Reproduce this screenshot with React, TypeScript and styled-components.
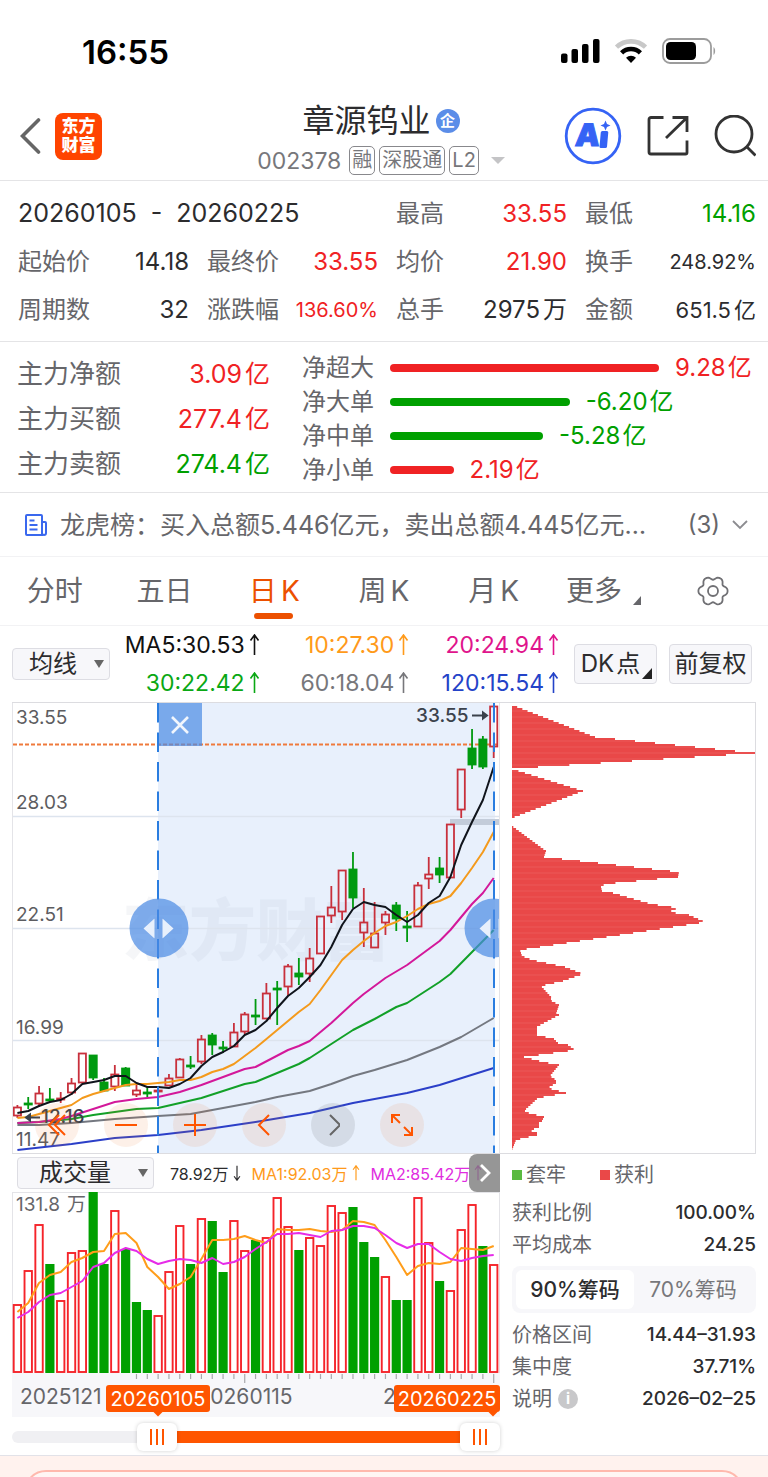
import React, { useState } from "react";
import styled, { createGlobalStyle } from "styled-components";

const RED = "#f02224";
const GREEN = "#00a000";
const INK = "#2c2c2e";
const MUTED = "#66666a";
const ORANGE = "#ff5500";
const FONT = '"Inter", "Noto Sans CJK SC", sans-serif';

const GlobalStyle = createGlobalStyle`
  *, *::before, *::after { box-sizing: border-box; }
  body { margin: 0; background: #fff; font-family: ${FONT}; color: ${INK}; }
  button, select, input { font-family: inherit; margin: 0; padding: 0; border: 0; background: none; color: inherit; }
  dl, dd, dt, h1, p, ul { margin: 0; padding: 0; list-style: none; }
  svg { display: block; }
`;

const toneColor = { up: RED, down: GREEN, flat: INK };
type Tone = keyof typeof toneColor;

/* ---------- status bar and header ---------- */

const Page = styled.div`
  overflow: hidden;
`;

const StatusBar = styled.div`
  display: flex;
  align-items: center;
  justify-content: space-between;
  height: 92px;
  padding: 10px 52px 0 82px;
`;

const Clock = styled.time`
  padding-top: 2px;
  font-size: 33px;
  line-height: 40px;
  font-weight: 600;
  color: #000;
`;

const Signals = styled.div`
  display: flex;
  align-items: center;
  gap: 14px;
`;

const Header = styled.header`
  display: grid;
  grid-template-columns: 1fr auto 1fr;
  align-items: center;
  height: 89px;
  padding: 0 12px 0 6px;
  border-bottom: 1px solid #e4e4e6;
`;

const HeaderSide = styled.div<{ $end?: boolean }>`
  display: flex;
  align-items: center;
  gap: ${(p) => (p.$end ? 25 : 14)}px;
  justify-content: ${(p) => (p.$end ? "flex-end" : "flex-start")};
  padding-left: ${(p) => (p.$end ? 0 : 14)}px;
`;

const IconButton = styled.button`
  display: flex;
  align-items: center;
  justify-content: center;
  cursor: pointer;
`;

const BrandLogo = styled.a`
  display: grid;
  place-content: center;
  width: 47px;
  height: 47px;
  border-radius: 8px;
  background: #ff4400;
  color: #fff;
  font-size: 17px;
  line-height: 19px;
  font-weight: 900;
  text-decoration: none;
`;

const TitleBlock = styled.div`
  display: flex;
  flex-direction: column;
  align-items: center;
  gap: 5px;
  padding-top: 4px;
`;

const TitleLine = styled.div`
  display: flex;
  align-items: center;
  gap: 5px;
`;

const StockName = styled.h1`
  font-size: 32px;
  line-height: 40px;
  font-weight: 400;
`;

const CompanyBadge = styled.span`
  display: grid;
  place-content: center;
  width: 24px;
  height: 24px;
  border-radius: 50%;
  background: #5b8de8;
  color: #fff;
  font-size: 15px;
  line-height: 20px;
  font-weight: 700;
`;

const CodeLine = styled.div`
  display: flex;
  align-items: center;
  gap: 4px;
  color: #77777b;
  font-size: 23px;
  line-height: 30px;
`;

const StockCode = styled.span`
  margin-right: 4px;
`;

const Tag = styled.span`
  height: 29px;
  padding: 0 2px;
  border: 1px solid #88888c;
  border-radius: 5px;
  font-size: 20px;
  line-height: 27px;
`;

const Caret = styled.i<{ $color: string; $size: number; $height: number }>`
  border: ${(p) => p.$size}px solid transparent;
  border-bottom-width: 0;
  border-top: ${(p) => p.$height}px solid ${(p) => p.$color};
`;

const SwitchStock = styled(IconButton)`
  margin-left: 8px;
`;

/* ---------- quote statistics ---------- */

const Stats = styled.dl`
  display: grid;
  grid-template-columns: repeat(4, 1fr);
  column-gap: 18px;
  grid-auto-rows: 48px;
  padding: 9px 12px 7px 18px;
  border-bottom: 1px solid #e4e4e6;
`;

const DateRange = styled.div`
  grid-column: span 2;
  font-size: 25px;
  line-height: 46px;
  white-space: pre;
`;

const Stat = styled.div`
  display: flex;
  align-items: center;
  justify-content: space-between;
  white-space: nowrap;
`;

const StatLabel = styled.dt`
  color: ${MUTED};
  font-size: 24px;
  line-height: 32px;
`;

const StatValue = styled.dd<{ $tone: Tone; $size?: number }>`
  display: flex;
  gap: 3px;
  color: ${(p) => toneColor[p.$tone]};
  font-size: ${(p) => p.$size ?? 24}px;
  line-height: 32px;
`;

/* ---------- capital flow ---------- */

const FlowSection = styled.section`
  display: grid;
  grid-template-columns: 34fr 61fr;
  column-gap: 32px;
  padding: 9px 12px 6px 17px;
  height: 151px;
  border-bottom: 1px solid #e4e4e6;
`;

const FlowTotals = styled.dl`
  display: flex;
  flex-direction: column;
  justify-content: space-around;
`;

const FlowTotal = styled.div`
  display: flex;
  justify-content: space-between;
  font-size: 26px;
  line-height: 44px;
`;

const FlowName = styled.dt`
  color: ${MUTED};
`;

const FlowAmount = styled.dd<{ $tone: Tone }>`
  display: flex;
  gap: 3px;
  color: ${(p) => toneColor[p.$tone]};
  font-size: 25px;
`;

const OrderFlows = styled.ul`
  display: flex;
  flex-direction: column;
  justify-content: space-between;
`;

const OrderFlow = styled.li`
  display: flex;
  align-items: center;
  font-size: 24px;
  line-height: 33px;
  white-space: nowrap;
`;

const OrderName = styled.span`
  width: 88px;
  flex: none;
  color: ${MUTED};
`;

const OrderTrack = styled.div`
  display: flex;
  flex: 1;
  align-items: center;
  gap: 16px;
`;

const OrderBar = styled.i<{ $tone: Tone }>`
  height: 8px;
  border-radius: 4px;
  background: ${(p) => toneColor[p.$tone]};
`;

const OrderAmount = styled.span<{ $tone: Tone }>`
  display: flex;
  gap: 2px;
  color: ${(p) => toneColor[p.$tone]};
`;

/* ---------- news line and tabs ---------- */

const NewsLine = styled.a`
  display: flex;
  align-items: center;
  height: 64px;
  padding: 0 20px 0 24px;
  border-bottom: 1px solid #f2f2f4;
  color: ${MUTED};
  font-size: 25px;
  line-height: 36px;
  text-decoration: none;
`;

const NewsText = styled.span`
  flex: 1;
  min-width: 0;
  margin: 0 16px 0 12px;
  overflow: hidden;
  text-overflow: ellipsis;
  white-space: nowrap;
`;

const NewsCount = styled.span`
  margin-right: 12px;
  font-size: 24px;
`;

const Tabs = styled.nav`
  display: grid;
  grid-template-columns: repeat(7, 1fr);
  height: 69px;
  border-bottom: 1px solid #f2f2f4;
`;

const Tab = styled.button<{ $active?: boolean }>`
  position: relative;
  display: flex;
  align-items: center;
  justify-content: center;
  gap: 4px;
  color: ${(p) => (p.$active ? "#ec5000" : MUTED)};
  font-size: 28px;
  line-height: 40px;
  cursor: pointer;

  &::after {
    content: "";
    display: ${(p) => (p.$active ? "block" : "none")};
    position: absolute;
    bottom: 6px;
    left: calc(50% - 20px);
    width: 39px;
    height: 6px;
    border-radius: 3px;
    background: #ec5000;
  }
`;

const CornerMark = styled.i<{ $size: number; $color: string }>`
  align-self: flex-end;
  border-left: ${(p) => p.$size}px solid transparent;
  border-bottom: ${(p) => p.$size + 1}px solid ${(p) => p.$color};
`;

const MoreMark = styled(CornerMark)`
  margin: 0 0 20px 7px;
`;

/* ---------- moving-average toolbar ---------- */

const Toolbar = styled.div`
  display: flex;
  align-items: center;
  height: 76px;
  padding: 0 16px 0 12px;
`;

const SelectBox = styled.label<{ $wide?: boolean }>`
  display: flex;
  align-items: center;
  justify-content: space-between;
  flex: none;
  width: ${(p) => (p.$wide ? 137 : 98)}px;
  height: 32px;
  padding: 0 5px 0 ${(p) => (p.$wide ? 21 : 16)}px;
  border: 1px solid #dddde3;
  border-radius: 4px;
  background: #f7f7fa;
  font-size: 24px;

  select {
    appearance: none;
    flex: 1;
    height: 30px;
    font-size: 24px;
    line-height: 30px;
  }
`;

const Averages = styled.ul`
  display: grid;
  grid-template-columns: repeat(3, 1fr);
  flex: 1;
  grid-auto-rows: 38px;
  margin-right: 15px;
`;

const Average = styled.li<{ $color: string }>`
  display: flex;
  align-items: center;
  justify-content: flex-end;
  gap: 4px;
  color: ${(p) => p.$color};
  font-size: 23px;
  white-space: nowrap;
`;

const ToolButtons = styled.div`
  display: flex;
  gap: 12px;
`;

const ToolButton = styled.button`
  display: flex;
  align-items: center;
  justify-content: center;
  gap: 2px;
  width: 83px;
  height: 40px;
  border: 1px solid #dddde3;
  border-radius: 4px;
  background: #f7f7fa;
  font-size: 24px;
  line-height: 38px;
  white-space: nowrap;
  cursor: pointer;
`;

const ToolCorner = styled(CornerMark)`
  margin: 0 -2px 4px 0;
`;

/* ---------- charts ---------- */

const ChartRow = styled.div<{ $framed?: boolean }>`
  display: grid;
  grid-template-columns: 2fr 1fr;
  column-gap: 12px;
  margin: 0 12px;
  border: solid #dcdce0;
  border-width: ${(p) => (p.$framed ? "1px 0" : "0")};
`;

const PricePane = styled.div`
  position: relative;
  overflow: hidden;
  border: solid #e4e4e8;
  border-width: 0 1px;
`;

const ChartSvg = styled.svg`
  width: 100%;
  height: auto;
  font-family: ${FONT};
`;

const ChipPane = styled.div`
  border-right: 1px solid #dcdce0;
`;

const CloseRange = styled.button`
  position: absolute;
  top: 0;
  left: 30%;
  display: grid;
  place-content: center;
  width: 43px;
  height: 43px;
  background: rgba(74, 138, 228, 0.7);
  cursor: pointer;
`;

const RangeHandle = styled.button<{ $at: number }>`
  position: absolute;
  top: 50%;
  left: ${(p) => p.$at}%;
  display: grid;
  place-content: center;
  width: 59px;
  height: 59px;
  border-radius: 50%;
  background: rgba(74, 138, 228, 0.7);
  transform: translate(-50%, -50%);
  cursor: ew-resize;
`;

const ChartControls = styled.div`
  position: absolute;
  left: 22px;
  bottom: 6px;
  display: flex;
  gap: 25px;
`;

const ChartControl = styled.button<{ $muted?: boolean }>`
  display: grid;
  place-content: center;
  width: 44px;
  height: 44px;
  border-radius: 50%;
  background: ${(p) => (p.$muted ? "rgba(120, 125, 135, 0.18)" : "rgba(240, 120, 50, 0.11)")};
  color: ${(p) => (p.$muted ? "#666" : ORANGE)};
  cursor: pointer;
`;

const VolumePane = styled.div`
  min-width: 0;
  padding-bottom: 5px;
`;

const VolumeBar = styled.div`
  position: relative;
  display: flex;
  align-items: center;
  height: 38px;
  overflow: hidden;
  padding-left: 5px;
  white-space: nowrap;
`;

const VolumeFigure = styled.span<{ $color: string }>`
  display: flex;
  align-items: center;
  gap: 4px;
  margin-left: 11px;
  color: ${(p) => p.$color};
  font-size: 16px;

  &:first-of-type {
    margin-left: 16px;
  }
`;

const ExpandButton = styled.button`
  position: absolute;
  top: 0;
  right: 0;
  display: grid;
  place-content: center;
  width: 31px;
  height: 38px;
  border-radius: 8px 0 0 8px;
  background: rgba(120, 120, 120, 0.78);
  cursor: pointer;
`;

const RangeSlider = styled.div`
  position: relative;
  height: 33px;
  display: flex;
  align-items: center;
`;

const SliderTrack = styled.div`
  position: relative;
  width: 100%;
  height: 12px;
  margin-top: 6px;
  border-radius: 6px;
  background: #f0f0f3;
`;

const SliderFill = styled.i`
  position: absolute;
  top: 0;
  bottom: 0;
  right: 20px;
  background: ${ORANGE};
`;

const SliderInput = styled.input`
  position: absolute;
  left: 0;
  top: -8px;
  width: 100%;
  height: 28px;
  appearance: none;
  pointer-events: none;

  &::-webkit-slider-thumb {
    appearance: none;
    width: 40px;
    height: 28px;
    border-radius: 6px;
    pointer-events: auto;
    background:
      linear-gradient(#ff5500, #ff5500) 13px 6px / 2px 16px no-repeat,
      linear-gradient(#ff5500, #ff5500) 19px 6px / 2px 16px no-repeat,
      linear-gradient(#ff5500, #ff5500) 25px 6px / 2px 16px no-repeat,
      #fff;
    box-shadow: 0 0 4px rgba(0, 0, 0, 0.18);
  }
`;

/* ---------- chip distribution figures ---------- */

const ChipInfo = styled.section`
  padding-top: 5px;
`;

const Legend = styled.ul`
  display: flex;
  gap: 34px;
  height: 32px;
`;

const LegendItem = styled.li<{ $color: string }>`
  display: flex;
  align-items: center;
  gap: 4px;
  color: ${MUTED};
  font-size: 20px;
  line-height: 32px;

  &::before {
    content: "";
    width: 10px;
    height: 10px;
    background: ${(p) => p.$color};
  }
`;

const ChipList = styled.dl`
  padding: 6px 0 5px;
`;

const ChipRow = styled.div`
  display: flex;
  justify-content: space-between;
  align-items: center;
  height: 32px;
  font-size: 20px;
  line-height: 32px;
  white-space: nowrap;

  dt {
    display: flex;
    align-items: center;
    gap: 6px;
    color: ${MUTED};
  }

  dd {
    font-size: 19px;
    font-weight: 500;
  }
`;

const Segments = styled.div`
  display: flex;
  height: 47px;
  padding: 4px;
  border-radius: 8px;
  background: #f7f7fa;
`;

const Segment = styled.button<{ $active?: boolean }>`
  flex: 1;
  border-radius: 6px;
  background: ${(p) => (p.$active ? "#fff" : "transparent")};
  color: ${(p) => (p.$active ? INK : "#77777b")};
  font-size: 21px;
  line-height: 39px;
  font-weight: ${(p) => (p.$active ? 500 : 400)};
  white-space: nowrap;
  cursor: pointer;
`;

const InfoMark = styled.button`
  width: 20px;
  height: 20px;
  border-radius: 50%;
  background: #c8c8ca;
  color: #fff;
  font-size: 15px;
  line-height: 20px;
  font-weight: 700;
`;

/* ---------- footer ---------- */

const Footer = styled.footer`
  height: 22px;
  overflow: hidden;
  padding: 14px 24px 0;
  border-top: 1px solid #e2e2e8;
  background: #fff2ee;
`;

const PromoCard = styled.div`
  height: 48px;
  border: 2px solid #ffb9ad;
  border-radius: 22px;
  background: #fff6f4;
`;

/* ---------- data ---------- */

type Candle = [rising: 0 | 1, high: number, top: number, bottom: number, low: number];

const candles: Candle[] = [
  [1, 403, 405, 414, 416], [0, 395, 401, 402, 407], [1, 384, 391, 402, 405], [0, 386, 397, 399, 400],
  [1, 390, 396, 397, 401], [1, 376, 381, 391, 393], [1, 351, 351, 381, 381], [0, 353, 353, 376, 378],
  [0, 376, 380, 389, 390], [1, 363, 372, 385, 389], [0, 365, 366, 384, 384], [1, 381, 388, 393, 395],
  [0, 385, 390, 392, 395], [1, 386, 388, 390, 392], [1, 372, 376, 384, 384], [1, 356, 357, 376, 376],
  [0, 354, 363, 364, 367], [1, 333, 337, 360, 362], [0, 331, 333, 343, 353], [0, 339, 345, 346, 351],
  [1, 321, 330, 345, 345], [1, 310, 312, 330, 332], [0, 297, 313, 315, 323], [1, 281, 291, 317, 317],
  [0, 279, 286, 287, 323], [1, 262, 264, 285, 294], [0, 256, 271, 275, 283], [1, 246, 256, 272, 280],
  [1, 214, 214, 252, 252], [1, 184, 205, 214, 221], [1, 168, 168, 210, 218], [0, 150, 167, 196, 206],
  [1, 186, 220, 231, 245], [1, 200, 231, 246, 246], [1, 209, 212, 221, 233], [0, 200, 203, 217, 229],
  [0, 209, 224, 226, 240], [1, 180, 183, 225, 225], [1, 155, 172, 177, 187], [0, 155, 166, 173, 181],
  [1, 122, 122, 176, 176], [1, 67, 67, 108, 116], [0, 27, 46, 63, 67], [0, 34, 37, 65, 67],
  [1, 4, 4, 45, 56],
];

type Point = [index: number, y: number];
const dense = (ys: number[]): Point[] => ys.map((y, i) => [i, y]);

const priceLines: { color: string; points: Point[] }[] = [
  { color: "#2b3fc8", points: [[0, 448], [5, 442], [9, 436], [13, 433], [17, 428], [22, 420], [27, 411], [31, 401], [36, 391], [39, 383], [44, 366]] },
  { color: "#747880", points: [[0, 423], [2, 423], [5, 421], [9, 417], [13, 414], [16, 412], [19, 406], [22, 400], [24, 395], [27, 389], [29, 382], [31, 374], [33, 368], [36, 358], [39, 345], [41, 335], [44, 316]] },
  { color: "#12a028", points: [[0, 421], [2, 420], [5, 417], [7, 413], [9, 410], [11, 407], [13, 406], [15, 401], [17, 396], [19, 389], [21, 382], [22, 380], [24, 371], [26, 362], [27, 356], [29, 342], [31, 328], [33, 317], [35, 305], [36, 301], [39, 280], [40, 272], [44, 228]] },
  { color: "#d3189a", points: [[0, 421], [2, 420], [4, 417], [5, 414], [7, 407], [9, 400], [11, 397], [13, 395], [15, 390], [17, 383], [19, 375], [21, 367], [22, 365], [25, 348], [26, 344], [27, 339], [29, 321], [31, 301], [32, 292], [34, 276], [36, 263], [37, 255], [39, 239], [40, 228], [42, 202], [43, 191], [44, 176]] },
  { color: "#f49a1c", points: dense([416, 415, 412, 409, 406, 403, 396, 392, 389, 386, 383, 382, 382, 381, 380, 378, 378, 375, 370, 367, 362, 354, 346, 337, 328, 319, 310, 302, 288, 273, 258, 248, 239, 231, 224, 220, 214, 207, 202, 199, 194, 181, 166, 150, 130]) },
  { color: "#10141c", points: dense([411, 409, 404, 400, 398, 392, 382, 380, 378, 374, 374, 381, 385, 385, 386, 382, 376, 364, 355, 350, 344, 333, 328, 319, 306, 294, 286, 275, 263, 245, 223, 207, 200, 203, 205, 213, 220, 213, 201, 194, 175, 143, 120, 98, 65]) },
];

const priceTicks: [string, number][] = [["33.55", 21], ["28.03", 106], ["22.51", 218], ["16.99", 331], ["11.47", 443]];

const volumeTops = [
  112, 78, 32, 72, 108, 60, 58, 0, 72, 18, 57, 110, 118, 123, 79, 33, 72, 26, 29, 80, 28, 58, 48, 45, 5, 34, 58, 45, 53,
  13, 20, 15, 50, 65, 84, 108, 108, 5, 50, 89, 98, 37, 12, 54, 72,
];

/* sessions whose volume bar is drawn solid green */
const fallingVolume = new Set([3, 7, 8, 10, 11, 12, 16, 18, 19, 22, 26, 31, 32, 33, 35, 36, 39, 43]);

const volumeLines = [
  { color: "#ff9d1a", points: dense([120, 111, 91, 83, 80, 70, 66, 60, 59, 42, 41, 51, 75, 85, 97, 92, 85, 67, 48, 48, 47, 44, 48, 51, 37, 38, 38, 37, 39, 40, 38, 29, 30, 33, 48, 65, 83, 74, 71, 72, 70, 56, 57, 58, 54]) },
  { color: "#e62ce8", points: dense([126, 120, 110, 103, 101, 95, 89, 75, 71, 61, 56, 59, 67, 72, 69, 67, 68, 71, 66, 72, 70, 65, 57, 50, 42, 42, 41, 43, 45, 39, 38, 34, 34, 36, 43, 51, 56, 52, 52, 60, 67, 69, 66, 64, 63]) },
];

const chipOutline: [width: number, y: number][] = [
  [0, 3], [83, 35], [243, 51], [214, 53], [26, 65], [0, 66], [0, 67], [71, 89], [0, 116], [0, 124], [34, 149], [32, 155],
  [167, 170], [166, 175], [93, 182], [89, 185], [90, 189], [101, 191], [139, 202], [166, 206], [157, 210], [177, 213],
  [193, 220], [181, 222], [8, 248], [10, 254], [20, 258], [53, 265], [71, 272], [51, 279], [29, 284], [40, 296],
  [38, 298], [47, 303], [44, 312], [47, 313], [30, 322], [25, 325], [25, 333], [42, 337], [47, 342], [56, 343],
  [63, 348], [34, 352], [12, 355], [31, 360], [47, 363], [38, 374], [44, 378], [44, 381], [36, 386], [54, 391],
  [26, 396], [13, 408], [13, 410], [32, 415], [30, 419], [27, 421], [27, 426], [17, 428], [25, 431], [25, 433],
  [4, 438], [0, 448],
];

const chipWidthAt = (y: number) => {
  const next = chipOutline.findIndex((p) => p[1] >= y);
  if (next <= 0) return 0;
  const [w0, y0] = chipOutline[next - 1];
  const [w1, y1] = chipOutline[next];
  return w0 + ((w1 - w0) * (y - y0)) / (y1 - y0);
};

const xAt = (i: number) => 5.4 + 10.825 * i;
const toPath = (points: Point[]) => points.map(([i, y]) => `${xAt(i).toFixed(1)},${y}`).join(" ");

const quoteStats: { label: string; value: string; unit?: string; tone: Tone; size?: number }[] = [
  { label: "最高", value: "33.55", tone: "up" },
  { label: "最低", value: "14.16", tone: "down" },
  { label: "起始价", value: "14.18", tone: "flat" },
  { label: "最终价", value: "33.55", tone: "up" },
  { label: "均价", value: "21.90", tone: "up" },
  { label: "换手", value: "248.92%", tone: "flat", size: 20 },
  { label: "周期数", value: "32", tone: "flat" },
  { label: "涨跌幅", value: "136.60%", tone: "up", size: 20 },
  { label: "总手", value: "2975", unit: "万", tone: "flat" },
  { label: "金额", value: "651.5", unit: "亿", tone: "flat", size: 22 },
];

const flowTotals: { label: string; value: string; tone: Tone }[] = [
  { label: "主力净额", value: "3.09", tone: "up" },
  { label: "主力买额", value: "277.4", tone: "up" },
  { label: "主力卖额", value: "274.4", tone: "down" },
];

const orderFlows = [
  { label: "净超大", value: 9.28 },
  { label: "净大单", value: -6.2 },
  { label: "净中单", value: -5.28 },
  { label: "净小单", value: 2.19 },
];

const averages = [
  { text: "MA5:30.53", color: "#111" },
  { text: "10:27.30", color: "#ff9a1a" },
  { text: "20:24.94", color: "#e0148c" },
  { text: "30:22.42", color: "#0aa814" },
  { text: "60:18.04", color: "#77777b" },
  { text: "120:15.54", color: "#2443c8" },
];

/* ---------- small drawings ---------- */

const Arrow = ({ down, size = 22 }: { down?: boolean; size?: number }) => (
  <svg width={size / 2} height={size} viewBox="0 0 11 22" fill="none" stroke="currentColor" strokeWidth="1.6" aria-hidden="true">
    <path d={down ? "M5.5 1v20M1.5 15.5l4 5.5 4-5.5" : "M5.5 21V1M1.5 6.5l4-5.5 4 5.5"} />
  </svg>
);

const SignalIcon = () => (
  <svg width="39" height="26" viewBox="0 0 39 26" aria-label="信号">
    <rect x="0" y="15.500" width="6.500" height="9.500" rx="2" />
    <rect x="10.500" y="11" width="6.500" height="14" rx="2" />
    <rect x="21" y="6" width="6.500" height="19" rx="2" />
    <rect x="32" y="1" width="6.500" height="24" rx="2" />
  </svg>
);

const WifiIcon = () => (
  <svg width="34" height="26" viewBox="0 0 34 26" fill="none" aria-label="无线网络">
    <path d="M2.500 9.200a21 21 0 0 1 29 0" stroke="#c8c8c8" strokeWidth="4.600" />
    <path d="M7.600 14.800a13.600 13.600 0 0 1 18.800 0" stroke="#000" strokeWidth="4.600" />
    <path d="M17 25l-5-5.200a7.200 7.200 0 0 1 10 0z" fill="#000" />
  </svg>
);

const BatteryIcon = () => (
  <svg width="54" height="26" viewBox="0 0 54 26" aria-label="电池">
    <rect x="1" y="1" width="48" height="24" rx="7" fill="none" stroke="#9c9c9c" strokeWidth="1.800" />
    <rect x="4" y="4" width="30" height="18" rx="4.500" />
    <path d="M51.500 9v8c2.200-1.400 2.200-6.600 0-8z" fill="#9c9c9c" />
  </svg>
);

const AiIcon = () => (
  <svg width="58" height="58" viewBox="0 0 58 58">
    <circle cx="29" cy="29" r="26.800" fill="none" stroke="#3563f5" strokeWidth="2.800" />
    <g fill="#3563f5" transform="skewX(-5)">
      <text x="14" y="39.500" fontFamily="Inter" fontWeight="900" fontSize="31" stroke="#3563f5" strokeWidth="1">A</text>
      <rect x="39" y="24" width="7.500" height="17" rx="1.500" />
    </g>
    <path d="M41.500 13.500l1.500 3.500 3.500 1.500-3.500 1.500-1.500 3.500-1.500-3.500-3.500-1.500 3.500-1.500z" fill="#3563f5" />
  </svg>
);

const ShareIcon = () => (
  <svg width="42" height="42" viewBox="0 0 42 42" fill="none" stroke="#333" strokeWidth="2.800">
    <path d="M16.500 2.500H4a2 2 0 0 0-2 2V37a2 2 0 0 0 2 2h34.500a1.500 1.500 0 0 0 1.500-1.500V25.500" />
    <path d="M25.500 2.500H40V17M39.500 3L19 23" />
  </svg>
);

const SearchIcon = () => (
  <svg width="42" height="42" viewBox="0 0 42 42" fill="none" stroke="#333" strokeWidth="2.800">
    <circle cx="20" cy="19" r="18" />
    <path d="M32.500 31.500l9 9" />
  </svg>
);

const gearPath =
  Array.from({ length: 72 }, (_, k) => {
    const a = (k * Math.PI) / 36;
    const r = 13.2 + 1.7 * Math.cos(6 * a) - 0.3 * Math.cos(12 * a);
    return `${k ? "L" : "M"}${(17 + r * Math.cos(a)).toFixed(2)} ${(16 + r * Math.sin(a)).toFixed(2)}`;
  }).join("") + "Z";

const GearIcon = () => (
  <svg width="34" height="32" viewBox="0 0 34 32" fill="none" stroke="#707074" strokeWidth="1.800">
    <path d={gearPath} strokeLinejoin="round" />
    <circle cx="17" cy="16" r="5" />
  </svg>
);

const ListIcon = () => (
  <svg width="24" height="24" viewBox="0 0 24 24" fill="none" stroke="#3a68ee" strokeWidth="2">
    <path d="M18 22H3a1 1 0 0 1-1-1V3a1 1 0 0 1 1-1h14a1 1 0 0 1 1 1z" />
    <path d="M18 9h3a1 1 0 0 1 1 1v10a2 2 0 0 1-4 0M5.500 7.500h5M5.500 12h8M5.500 16.500h8" />
  </svg>
);

/* ---------- chart components ---------- */

const PriceChart = () => (
  <ChartSvg viewBox="0 0 486 450" role="img" aria-label="日K线图">
    <rect x="145" y="0" width="337" height="450" fill="#e8f0fc" />
    <text x="109" y="252" fontSize="67" fontWeight="900" fill="#8090a8" opacity="0.07">东方财富</text>
    <path d="M0 113.500H486M0 225.500H486M0 337.500H486" stroke="#dde4ee" strokeWidth="1.500" />
    <rect x="437" y="116" width="49" height="6" fill="#c3ccda" />
    <path d="M0 41.500H486" stroke="#ef7a3c" strokeWidth="2" strokeDasharray="4 2" />
    {priceTicks.map(([label, y]) => (
      <text key={label} x="3" y={y} fontSize="19" fill="#5c5c60">{label}</text>
    ))}
    {candles.map(([rising, high, top, bottom, low], i) => {
      const x = xAt(i) - 1;
      const color = rising ? "#c8303c" : "#009a10";
      return (
        <g key={i} stroke={color} strokeWidth="1.800" fill={rising ? "none" : color}>
          <path d={`M${x} ${high - 1}V${top - 1}M${x} ${bottom - 1}V${low - 1}`} />
          <rect x={x - 3.6} y={top - 0.5} width="7.200" height={Math.max(bottom - top - 1, 1)} />
        </g>
      );
    })}
    <g transform="translate(-1 -1)" fill="none" strokeWidth="2" strokeLinejoin="round">
      {priceLines.map((line) => (
        <polyline key={line.color} points={toPath(line.points)} stroke={line.color} />
      ))}
    </g>
    <g fill="#3b424c" fontSize="19" fontWeight="500">
      <text x="403" y="19">33.55</text>
      <path d="M459 12.500h13M470 9.500v6l4-3z" stroke="#3b424c" strokeWidth="2" />
      <text x="28" y="420">12.16</text>
      <path d="M27 414.500H15M17 411.500v6l-4-3z" stroke="#3b424c" strokeWidth="2" />
    </g>
    <path d="M145 0V450M481 0V450" stroke="#2a7de0" strokeWidth="2" strokeDasharray="19.500 10" />
  </ChartSvg>
);

const ChipChart = () => (
  <ChartSvg viewBox="0 0 243 450" role="img" aria-label="筹码分布">
    {Array.from({ length: 223 }, (_, k) => 3 + k * 2).map((y, k) => {
      const width = chipWidthAt(y);
      return width > 0 ? (
        <rect key={y} x="0" y={y - 2} width={width} height="2" fill={k % 3 ? "#e94848" : "#ea5050"} />
      ) : null;
    })}
  </ChartSvg>
);

const DateFlag = ({ x, width, tip, label }: { x: number; width: number; tip: number; label: string }) => (
  <g fill={ORANGE}>
    <rect x={x} y="193" width={width} height="27" rx="3" />
    <path d={`M${tip - 5} 219.500h10l-5 5z`} />
    <text x={x + width / 2} y="214" fontSize="20" fill="#fff" textAnchor="middle">{label}</text>
  </g>
);

const VolumeChart = () => (
  <ChartSvg viewBox="0 0 488 225" role="img" aria-label="成交量图">
    <path d="M0 0.500H488M0.500 0V181M487.500 0V181" stroke="#e4e4e8" />
    <rect x="0" y="181" width="488" height="44" fill="#f7f7fa" />
    <text x="4" y="19" fontSize="19" fill={MUTED}>131.8</text>
    <text x="55" y="19" fontSize="19" fill={MUTED}>万</text>
    {volumeTops.map((top, i) =>
      fallingVolume.has(i) ? (
        <rect key={i} x={xAt(i) - 4.6} y={top} width="9.200" height={181 - top} fill="#00a000" />
      ) : (
        <rect key={i} x={xAt(i) - 3.7} y={top + 1} width="7.400" height={179 - top} fill="#fff" stroke="#f5242a" strokeWidth="1.900" />
      ),
    )}
    <g fill="none" strokeWidth="2" strokeLinejoin="round">
      {volumeLines.map((line) => (
        <polyline key={line.color} points={toPath(line.points)} stroke={line.color} />
      ))}
    </g>
    {volumeTops.map((_, i) =>
      i > 10 ? <path key={i} d={`M${xAt(i)} 182v${i === 21 || i === 44 ? 9 : 5}`} stroke="#a8a8ac" strokeWidth="1.200" /> : null,
    )}
    <g fontSize="21" fill={MUTED}>
      <text x="8" y="212">2025121</text>
      <text x="233" y="212" textAnchor="middle">20260115</text>
      <text x="371" y="212">2</text>
    </g>
    <DateFlag x={94} width={104} tip={146} label="20260105" />
    <DateFlag x={382} width={106} tip={481} label="20260225" />
  </ChartSvg>
);

export default function App() {
  const [rangeStart, setRangeStart] = useState(28);
  const [rangeEnd, setRangeEnd] = useState(100);
  const [chipShare, setChipShare] = useState(90);
  const [period, setPeriod] = useState("日K");

  return (
    <Page>
      <GlobalStyle />
      <StatusBar>
        <Clock>16:55</Clock>
        <Signals>
          <SignalIcon />
          <WifiIcon />
          <BatteryIcon />
        </Signals>
      </StatusBar>

      <Header>
        <HeaderSide>
          <IconButton aria-label="返回">
            <svg width="21" height="38" viewBox="0 0 21 38" fill="none" stroke="#666" strokeWidth="3.600" strokeLinecap="round">
              <path d="M18.500 3L2.500 19l16 16" />
            </svg>
          </IconButton>
          <BrandLogo href="#home">
            <span>东方</span>
            <span>财富</span>
          </BrandLogo>
        </HeaderSide>
        <TitleBlock>
          <TitleLine>
            <StockName>章源钨业</StockName>
            <CompanyBadge>企</CompanyBadge>
          </TitleLine>
          <CodeLine>
            <StockCode>002378</StockCode>
            <Tag>融</Tag>
            <Tag>深股通</Tag>
            <Tag>L2</Tag>
            <SwitchStock aria-label="切换股票">
              <Caret $color="#c4c4c6" $size={7} $height={7} />
            </SwitchStock>
          </CodeLine>
        </TitleBlock>
        <HeaderSide $end>
          <IconButton aria-label="AI 助手"><AiIcon /></IconButton>
          <IconButton aria-label="分享"><ShareIcon /></IconButton>
          <IconButton aria-label="搜索"><SearchIcon /></IconButton>
        </HeaderSide>
      </Header>

      <Stats>
        <DateRange>20260105  -  20260225</DateRange>
        {quoteStats.map((s) => (
          <Stat key={s.label}>
            <StatLabel>{s.label}</StatLabel>
            <StatValue $tone={s.tone} $size={s.size}>
              <span>{s.value}</span>
              {s.unit && <span>{s.unit}</span>}
            </StatValue>
          </Stat>
        ))}
      </Stats>

      <FlowSection>
        <FlowTotals>
          {flowTotals.map((f) => (
            <FlowTotal key={f.label}>
              <FlowName>{f.label}</FlowName>
              <FlowAmount $tone={f.tone}>
                <span>{f.value}</span>
                <span>亿</span>
              </FlowAmount>
            </FlowTotal>
          ))}
        </FlowTotals>
        <OrderFlows>
          {orderFlows.map((o) => {
            const tone: Tone = o.value > 0 ? "up" : "down";
            return (
              <OrderFlow key={o.label}>
                <OrderName>{o.label}</OrderName>
                <OrderTrack>
                  <OrderBar $tone={tone} style={{ width: `${(Math.abs(o.value) / 9.28) * 73.5}%` }} />
                  <OrderAmount $tone={tone}>
                    <span>{o.value.toFixed(2)}</span>
                    <span>亿</span>
                  </OrderAmount>
                </OrderTrack>
              </OrderFlow>
            );
          })}
        </OrderFlows>
      </FlowSection>

      <NewsLine href="#news">
        <ListIcon />
        <NewsText>龙虎榜：买入总额5.446亿元，卖出总额4.445亿元…</NewsText>
        <NewsCount>(3)</NewsCount>
        <svg width="16" height="10" viewBox="0 0 16 10" fill="none" stroke="#8c8c90" strokeWidth="1.800">
          <path d="M1 1l7 7 7-7" />
        </svg>
      </NewsLine>

      <Tabs>
        {["分时", "五日", "日K", "周K", "月K"].map((name) => (
          <Tab key={name} $active={name === period} onClick={() => setPeriod(name)}>
            {name.endsWith("K") ? (
              <>
                <span>{name[0]}</span>
                <span>K</span>
              </>
            ) : (
              name
            )}
          </Tab>
        ))}
        <Tab>
          更多
          <MoreMark $size={8} $color="#66666a" />
        </Tab>
        <IconButton aria-label="设置"><GearIcon /></IconButton>
      </Tabs>

      <Toolbar>
        <SelectBox>
          <select aria-label="主图指标" defaultValue="均线">
            <option>均线</option>
          </select>
          <Caret $color="#666" $size={5} $height={8} />
        </SelectBox>
        <Averages>
          {averages.map((a) => (
            <Average key={a.text} $color={a.color}>
              {a.text}
              <Arrow />
            </Average>
          ))}
        </Averages>
        <ToolButtons>
          <ToolButton>
            <span>DK</span>
            <span>点</span>
            <ToolCorner $size={10} $color="#222" />
          </ToolButton>
          <ToolButton>前复权</ToolButton>
        </ToolButtons>
      </Toolbar>

      <ChartRow $framed>
        <PricePane>
          <PriceChart />
          <CloseRange aria-label="关闭区间统计">
            <svg width="20" height="20" viewBox="0 0 20 20" stroke="#fff" strokeWidth="2.600" opacity="0.9">
              <path d="M2 2l16 16M18 2L2 18" />
            </svg>
          </CloseRange>
          {[30, 99].map((at) => (
            <RangeHandle key={at} $at={at} aria-label="拖动区间">
              <svg width="32" height="20" viewBox="0 0 32 20" fill="#e8f0fc">
                <path d="M12 0v20L1 10zM20 0v20l11-10z" />
              </svg>
            </RangeHandle>
          ))}
          <ChartControls>
            <ChartControl aria-label="最早">
              <svg width="20" height="22" viewBox="0 0 20 22" fill="none" stroke="currentColor" strokeWidth="2">
                <path d="M12 1L2 11l10 10M18 1L8 11l10 10" />
              </svg>
            </ChartControl>
            <ChartControl aria-label="缩小">
              <svg width="22" height="22" viewBox="0 0 22 22" stroke="currentColor" strokeWidth="2"><path d="M0 11h22" /></svg>
            </ChartControl>
            <ChartControl aria-label="放大">
              <svg width="22" height="22" viewBox="0 0 22 22" stroke="currentColor" strokeWidth="2"><path d="M0 11h22M11 0v22" /></svg>
            </ChartControl>
            <ChartControl aria-label="左移">
              <svg width="14" height="22" viewBox="0 0 14 22" fill="none" stroke="currentColor" strokeWidth="2"><path d="M12 1L2 11l10 10" /></svg>
            </ChartControl>
            <ChartControl aria-label="右移" $muted>
              <svg width="14" height="22" viewBox="0 0 14 22" fill="none" stroke="currentColor" strokeWidth="2"><path d="M4 1l10 10L4 21" /></svg>
            </ChartControl>
            <ChartControl aria-label="全屏">
              <svg width="22" height="22" viewBox="0 0 22 22" fill="none" stroke="currentColor" strokeWidth="2">
                <path d="M1 9V1h8M1 1l8 8M21 13v8h-8M21 21l-8-8" />
              </svg>
            </ChartControl>
          </ChartControls>
        </PricePane>
        <ChipPane>
          <ChipChart />
        </ChipPane>
      </ChartRow>

      <ChartRow>
        <VolumePane>
          <VolumeBar>
            <SelectBox $wide>
              <select aria-label="副图指标" defaultValue="成交量">
                <option>成交量</option>
              </select>
              <Caret $color="#666" $size={5} $height={8} />
            </SelectBox>
            <VolumeFigure $color={INK}>78.92万<Arrow down size={16} /></VolumeFigure>
            <VolumeFigure $color="#ff9a1a">MA1:92.03万<Arrow size={16} /></VolumeFigure>
            <VolumeFigure $color="#e02ce0">MA2:85.42万<Arrow size={16} /></VolumeFigure>
            <ExpandButton aria-label="展开">
              <svg width="12" height="18" viewBox="0 0 12 18" fill="none" stroke="#fff" strokeWidth="2.800"><path d="M2 1l8 8-8 8" /></svg>
            </ExpandButton>
          </VolumeBar>
          <VolumeChart />
          <RangeSlider>
            <SliderTrack>
              <SliderFill style={{ left: `${rangeStart}%` }} />
              <SliderInput type="range" aria-label="区间起点" value={rangeStart} onChange={(e) => setRangeStart(+e.target.value)} />
              <SliderInput type="range" aria-label="区间终点" value={rangeEnd} onChange={(e) => setRangeEnd(+e.target.value)} />
            </SliderTrack>
          </RangeSlider>
        </VolumePane>

        <ChipInfo>
          <Legend>
            <LegendItem $color="#5aba40">套牢</LegendItem>
            <LegendItem $color="#ea4848">获利</LegendItem>
          </Legend>
          <ChipList>
            <ChipRow><dt>获利比例</dt><dd>100.00%</dd></ChipRow>
            <ChipRow><dt>平均成本</dt><dd>24.25</dd></ChipRow>
          </ChipList>
          <Segments>
            {[90, 70].map((share) => (
              <Segment key={share} $active={share === chipShare} aria-pressed={share === chipShare} onClick={() => setChipShare(share)}>
                {share}%筹码
              </Segment>
            ))}
          </Segments>
          <ChipList>
            <ChipRow><dt>价格区间</dt><dd>14.44–31.93</dd></ChipRow>
            <ChipRow><dt>集中度</dt><dd>37.71%</dd></ChipRow>
            <ChipRow><dt>说明<InfoMark aria-label="说明">i</InfoMark></dt><dd>2026–02–25</dd></ChipRow>
          </ChipList>
        </ChipInfo>
      </ChartRow>

      <Footer>
        <PromoCard />
      </Footer>
    </Page>
  );
}
